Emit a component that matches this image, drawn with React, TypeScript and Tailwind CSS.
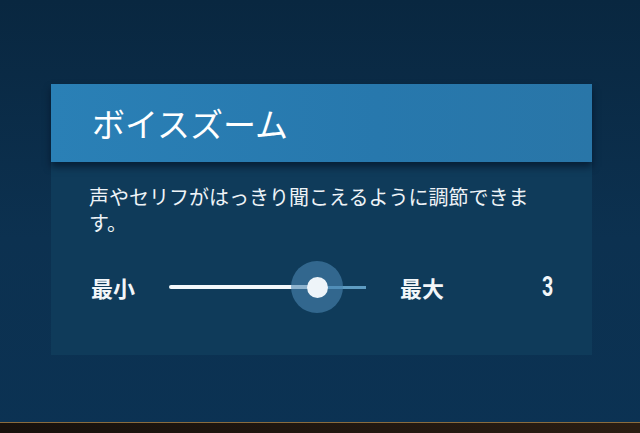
import React from "react";

const jp = { fontFamily: '"Noto Sans CJK JP", "Noto Sans", sans-serif' };

function Slider({ pos }: { pos: number }) {
  return (
    <div className="relative h-[52px] w-[197px] flex items-center">
      <div className="h-[4px] bg-[#f4f8fb] rounded-full" style={{ width: pos }} />
      <div className="h-[3px] flex-1 bg-[#5e9cc2]" />
      <div
        className="absolute top-0 h-[52px] w-[52px] -ml-[26px] rounded-full bg-[#4a86b0]/60 flex items-center justify-center"
        style={{ left: pos }}
      >
        <div className="h-[21px] w-[21px] rounded-full bg-[#eef4f9]" />
      </div>
    </div>
  );
}

export default function App() {
  return (
    <div
      className="w-[640px] h-[433px] flex flex-col overflow-hidden bg-[linear-gradient(180deg,#092740_0%,#0c3150_55%,#0b3253_100%)]"
      style={jp}
    >
      <div className="pt-[84px] pl-[51px] pr-[48px]">
        <div className="relative z-10 h-[78px] pl-[41px] flex items-center bg-[linear-gradient(90deg,#2a80b6,#2778ad_60%,#2976a8)] shadow-[0_5px_7px_rgba(0,10,25,0.55)]">
          <span className="text-[33px] text-white leading-none">ボイスズーム</span>
        </div>
        <div className="h-[193px] bg-[#0f3b5a] pl-[38px] pt-[22px]">
          <p className="w-[450px] text-[20px] leading-[26px] text-[#eef3f7]">
            声やセリフがはっきり聞こえるように調節できます。
          </p>
          <div className="mt-[25px] flex items-center">
            <span className="w-[80px] pl-[2px] text-[22px] font-bold text-[#f2f6f9]">最小</span>
            <Slider pos={148} />
            <span className="ml-[34px] w-[142px] text-[22px] font-bold text-[#f2f6f9]">最大</span>
            <span
              className="inline-block w-[12px] text-[28px] leading-none font-bold text-[#f2f6f9] scale-x-[0.7] origin-left"
              style={{ fontFamily: 'Roboto, "Liberation Sans", sans-serif' }}
            >
              3
            </span>
          </div>
        </div>
      </div>
      <div className="flex-1" />
      <div className="h-[11px] border-t border-[#8a6c3e] bg-[linear-gradient(90deg,#17110c,#221810_60%,#2a1d12)]" />
    </div>
  );
}
